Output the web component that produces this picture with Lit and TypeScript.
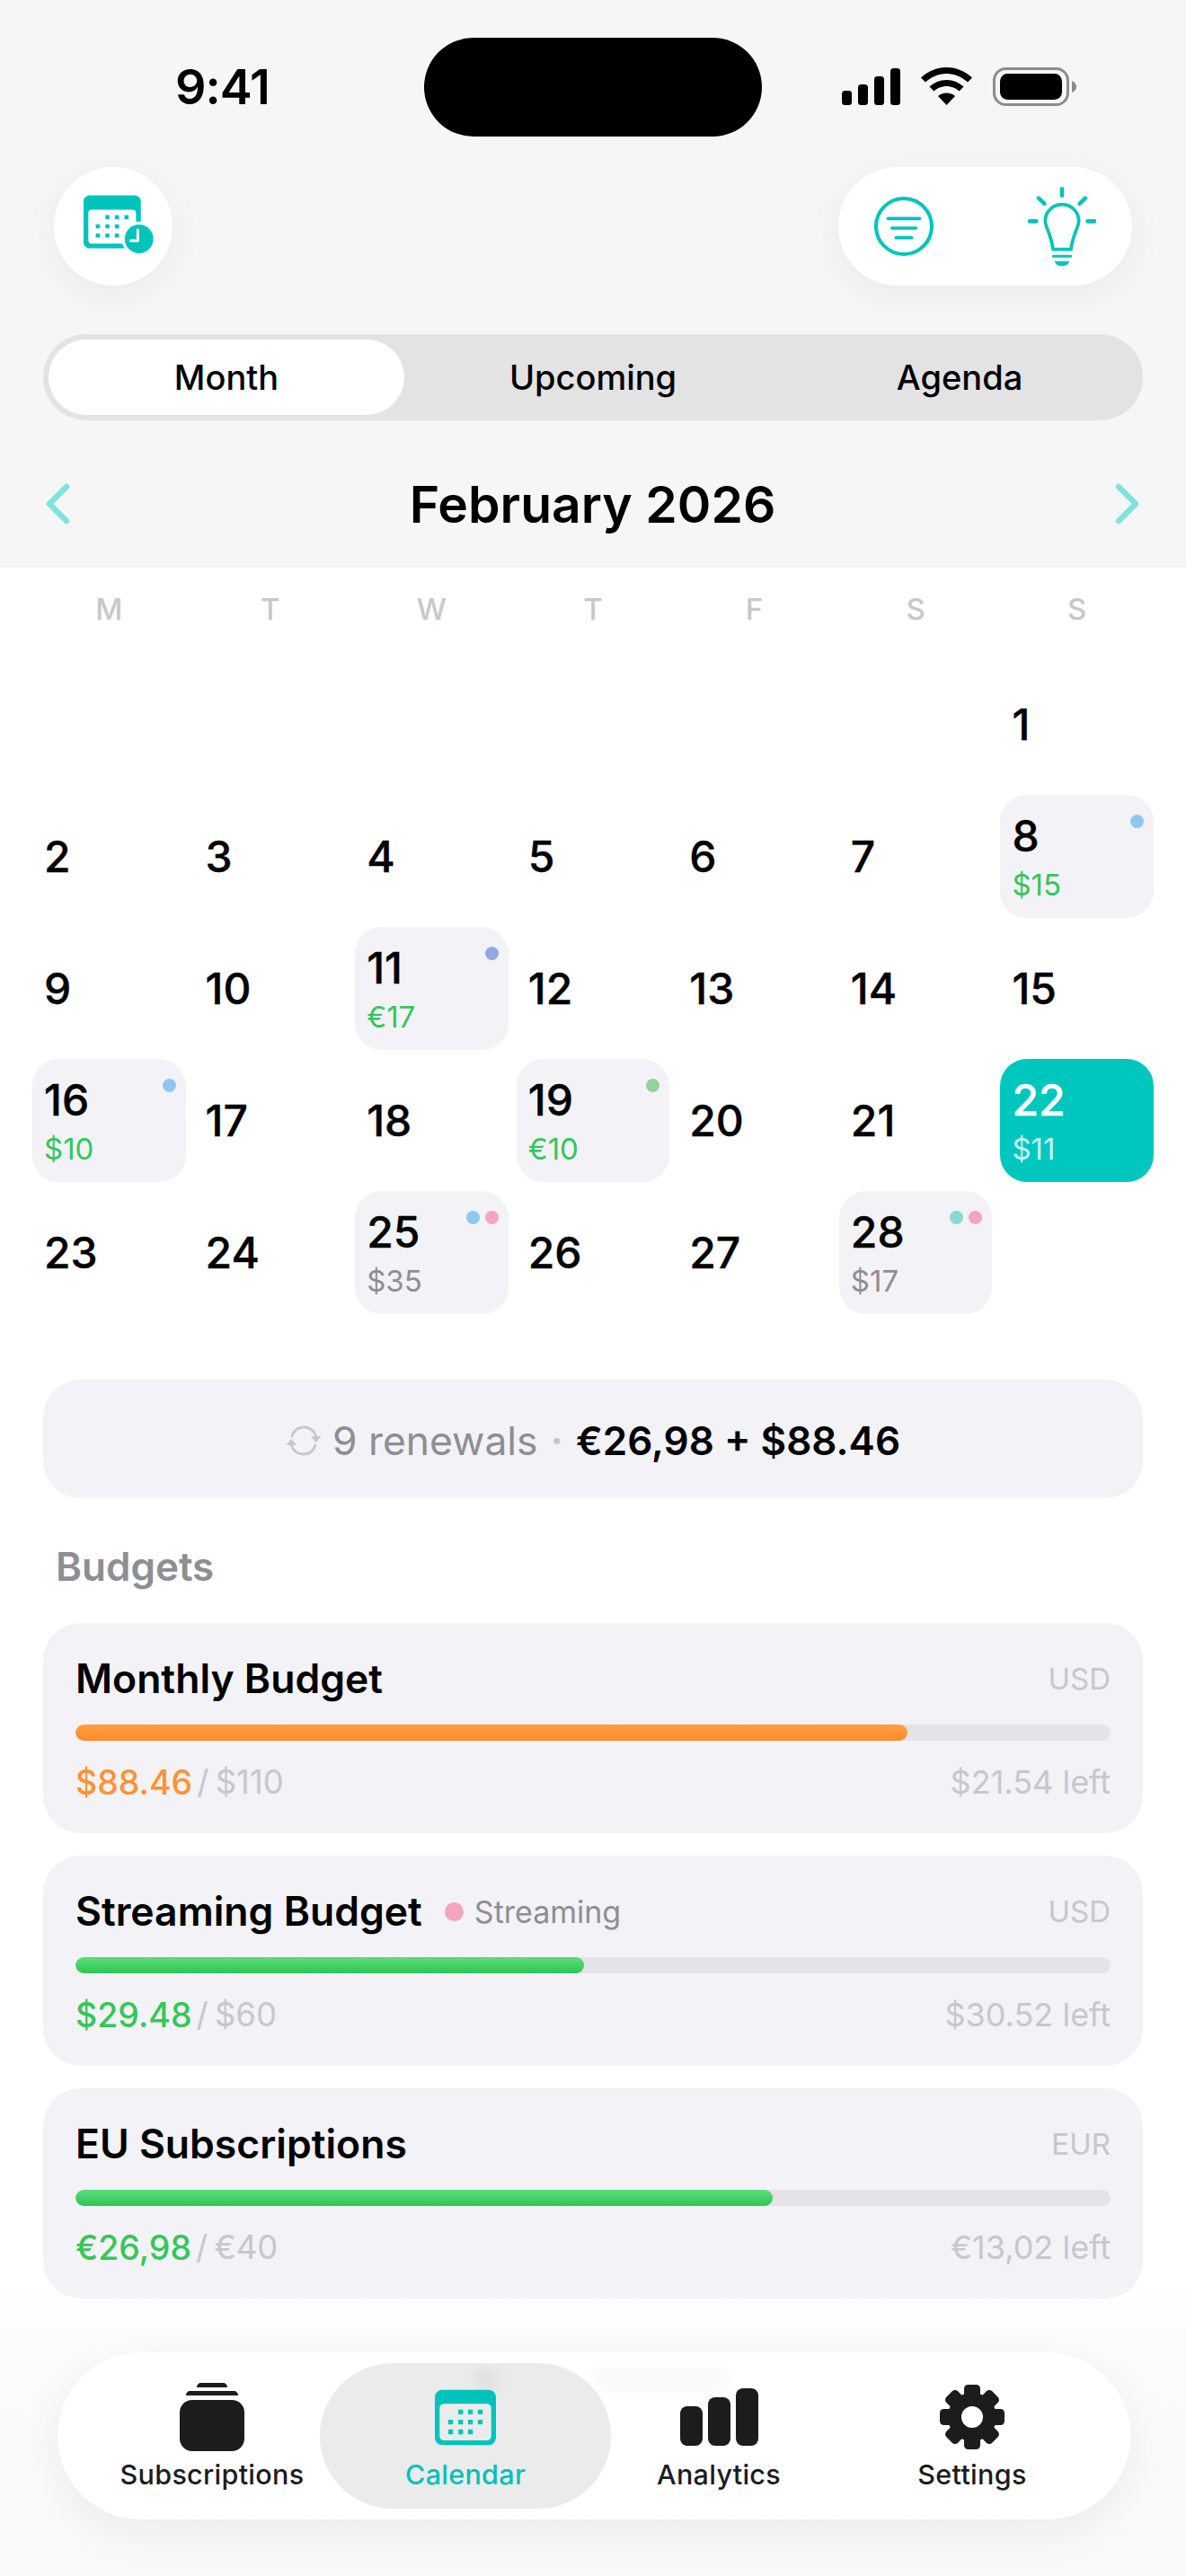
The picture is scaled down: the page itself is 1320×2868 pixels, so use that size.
import { LitElement, html, css, svg } from "lit";
import { customElement } from "lit/decorators.js";

type Day = { n: number; amt?: string; tone?: string; dots?: string[]; today?: boolean };
const days: (Day | null)[] = [
  null, null, null, null, null, null, { n: 1 },
  { n: 2 }, { n: 3 }, { n: 4 }, { n: 5 }, { n: 6 }, { n: 7 }, { n: 8, amt: "$15", tone: "green", dots: ["#8ec8ef"] },
  { n: 9 }, { n: 10 }, { n: 11, amt: "€17", tone: "green", dots: ["#93a8e2"] }, { n: 12 }, { n: 13 }, { n: 14 }, { n: 15 },
  { n: 16, amt: "$10", tone: "green", dots: ["#8ec8ef"] }, { n: 17 }, { n: 18 }, { n: 19, amt: "€10", tone: "green", dots: ["#90d39b"] }, { n: 20 }, { n: 21 }, { n: 22, amt: "$11", today: true },
  { n: 23 }, { n: 24 }, { n: 25, amt: "$35", tone: "grey", dots: ["#8ec8ef", "#f3a4bf"] }, { n: 26 }, { n: 27 }, { n: 28, amt: "$17", tone: "grey", dots: ["#88d8d3", "#f3a4bf"] }, null,
];
const budgets = [
  { name: "Monthly Budget", cur: "USD", spent: "$88.46", total: "$110", left: "$21.54 left", pct: 80.4, tone: "orange" },
  { name: "Streaming Budget", tag: "Streaming", cur: "USD", spent: "$29.48", total: "$60", left: "$30.52 left", pct: 49.1, tone: "ok" },
  { name: "EU Subscriptions", cur: "EUR", spent: "€26,98", total: "€40", left: "€13,02 left", pct: 67.4, tone: "ok" },
];

const calDots = (rows: number[][], ys: number[], r: number) =>
  rows.map((xs, i) => xs.map((x) => svg`<rect x=${x - r} y=${ys[i] - r} width=${r * 2} height=${r * 2} rx="2"/>`));

@customElement("app-root")
export class AppRoot extends LitElement {
  static styles = css`
    :host { display: block; width: 1320px; height: 2868px; position: relative; overflow: hidden; background: #fff;
      font-family: Inter, "Noto Sans", sans-serif; color: #000; }
    svg { display: block; }
    .header { background: #f6f6f6; height: 632px; display: flex; flex-direction: column; }
    .status { display: grid; grid-template-columns: 472px 376px 1fr; height: 110px; margin-top: 42px; align-items: center; }
    .time { padding-left: 195px; font-size: 54px; font-weight: 600; letter-spacing: -1px; line-height: 1; }
    .island { height: 110px; background: #000; border-radius: 55px; }
    .status-icons { padding-left: 89px; display: flex; }
    .tools { display: flex; justify-content: space-between; padding: 0 60px; margin-top: 34px; }
    .round { height: 132px; background: #fff; border-radius: 66px; box-shadow: 0 10px 40px rgba(0,0,0,.05); display: flex; align-items: center; }
    .round.one { width: 132px; box-sizing: border-box; padding: 0 0 4px 33px; }
    .round.two { width: 327px; padding-left: 40px; box-sizing: border-box; gap: 104px; }
    .seg { margin: 54px 48px 0; height: 96px; border-radius: 48px; background: #e3e3e4; display: grid; grid-template-columns: repeat(3, 1fr); }
    .seg span { display: flex; align-items: center; justify-content: center; font-size: 38px; font-weight: 500; margin: 6px; border-radius: 42px; }
    .seg span.on { background: #fff; }
    .month { flex: 1; display: flex; align-items: center; justify-content: space-between; padding: 22px 51px 0 50px; }
    .month h1 { margin: 0; font-size: 57px; font-weight: 600; }
    .weeks { display: grid; grid-template-columns: repeat(7, 1fr); gap: 9px; padding: 0 36px; height: 106px; align-items: start; }
    .weeks span { text-align: center; font-size: 33px; color: #c7c7cc; line-height: 40px; padding-top: 26px; font-weight: 500; }
    .grid { display: grid; grid-template-columns: repeat(7, 1fr); column-gap: 9px; row-gap: 10px; grid-auto-rows: 137px; padding: 0 36px; }
    .cell { padding: 0 13px; display: flex; flex-direction: column; justify-content: center; position: relative; border-radius: 30px; }
    .cell b { font-size: 48px; font-weight: 500; line-height: 58px; -webkit-text-stroke: .4px #000; }
    .cell.today b { -webkit-text-stroke: .4px #fff; }
    .cell i { font-style: normal; font-size: 33px; line-height: 40px; margin-top: 5px; }
    .cell.ev { background: #f2f2f7; }
    .cell.today { background: #00c7be; color: #fff; }
    .cell.today i { color: rgba(255,255,255,.8); }
    .green { color: #34c759; }
    .grey { color: #8e8e93; }
    .dots { position: absolute; top: 22px; right: 11px; display: flex; gap: 6px; }
    .dots u { width: 15px; height: 15px; border-radius: 50%; display: block; }
    .summary { margin: 73px 48px 0; height: 132px; box-sizing: border-box; padding-top: 3px; border-radius: 42px; background: #f2f2f7; display: flex; align-items: center; justify-content: center; font-size: 44.4px; }
    .summary .lab { color: #8e8e93; margin-left: 12px; }
    .summary .sep { color: #c7c7cc; margin: 0 14px; font-size: 45px; font-weight: 600; }
    .summary .sum { font-weight: 600; font-size: 44px; }
    h2 { margin: 46px 0 0 62px; font-size: 44px; line-height: 60px; font-weight: 600; color: #8e8e93; }
    .list { margin: 33px 48px 0; display: flex; flex-direction: column; gap: 25px; }
    .card { height: 234px; box-sizing: border-box; border-radius: 42px; background: #f2f2f7; padding: 35px 36px 0; }
    .row { display: flex; align-items: center; height: 54px; }
    .title { font-size: 44.5px; font-weight: 600; }
    .tag { display: flex; align-items: center; margin-left: 25px; font-size: 34px; color: #8e8e93; gap: 12px; }
    .tag u { width: 21px; height: 21px; border-radius: 50%; background: #f3a4bf; display: block; }
    .cur { margin-left: auto; font-size: 33px; color: #c7c7cc; }
    .track { height: 18px; margin-top: 24px; border-radius: 9px; background: #e3e3e8; overflow: hidden; }
    .fill { height: 100%; border-radius: 9px; }
    .fill.orange { background: linear-gradient(#ffa040, #ff8a2a); }
    .fill.ok { background: linear-gradient(#5ddd7c, #30c455); }
    .foot { display: flex; align-items: center; margin-top: 21px; height: 50px; font-size: 36.5px; color: #c7c7cc; }
    .foot .spent { font-weight: 500; font-size: 37.5px; }
    .foot .spent.orange { color: #ff9233; }
    .foot .spent.ok { color: #34c759; }
    .foot .of { margin-left: 5px; word-spacing: -3px; }
    .foot .left { margin-left: auto; font-size: 36px; }
    .fade { position: absolute; left: 0; right: 0; bottom: 0; height: 330px; background: linear-gradient(rgba(250,250,250,0), rgba(250,250,250,.9) 30%, #f9f9f9); pointer-events: none; }
    .tabbar { position: absolute; left: 64px; top: 2619px; width: 1194px; height: 186px; box-sizing: border-box; background: rgba(255,255,255,.96); border-radius: 93px;
      box-shadow: 0 14px 50px rgba(0,0,0,.06); padding: 12px 31px; display: grid; grid-template-columns: repeat(4, 282px); }
    .ghost { position: absolute; height: 28px; top: 16px; border-radius: 14px; filter: blur(7px); background: rgba(0,0,0,.022); }
    .ghost.a { left: 596px; width: 150px; }
    .ghost.b { left: 462px; width: 30px; background: rgba(0,0,0,.04); }
    .tab { position: relative; display: flex; flex-direction: column; align-items: center; color: #1c1c1e; }
    .tab.on { color: #00c0b8; }
    .tab.on::before { content: ""; position: absolute; top: 0; bottom: 0; left: -21px; right: -21px; background: #ebebec; border-radius: 81px; }
    .tab > * { position: relative; }
    .tab .ic { height: 88px; margin-top: 16px; display: flex; align-items: center; }
    .tab .lb { position: absolute; left: -40px; right: -40px; top: 104px; text-align: center; font-size: 30.5px; line-height: 40px; font-weight: 500; letter-spacing: .3px; }
  `;

  chevron(flip: boolean) {
    return html`<svg width="28" height="46" viewBox="0 0 28 46" fill="none" stroke="#7fe3de" stroke-width="6.500" stroke-linecap="round" stroke-linejoin="round">
      <path d=${flip ? "M4 4l19 19L4 42" : "M24 4L5 23l19 19"} /></svg>`;
  }

  calendarIcon() {
    return html`<svg width="68" height="63" viewBox="1097 118 206 187" fill="#00c4bb">
      <path fill-rule="evenodd" d="M1122 118h156a25 25 0 0 1 25 25v137a25 25 0 0 1-25 25h-156a25 25 0 0 1-25-25V143a25 25 0 0 1 25-25zM1128 165a15 15 0 0 0-15 15v94a15 15 0 0 0 15 15h144a15 15 0 0 0 15-15v-94a15 15 0 0 0-15-15z" />
      ${calDots([[1184, 1217, 1250], [1150, 1184, 1217, 1250], [1150, 1184, 1217]], [193, 227, 260], 8)}
    </svg>`;
  }

  render() {
    return html`
      <div class="header">
        <div class="status">
          <div class="time">9:41</div>
          <div class="island"></div>
          <div class="status-icons">
            <svg width="261" height="46" viewBox="937 74 261 46">
              <rect x="937" y="101" width="11" height="16" rx="3.500"/>
              <rect x="955" y="94" width="11" height="23" rx="3.500"/>
              <rect x="973" y="85" width="11" height="32" rx="3.500"/>
              <rect x="991" y="76" width="11" height="41" rx="3.500"/>
              <path d="M1053.500 75c11 0 21 4.500 28.500 11.500l-5 5c-6-5.500-14.500-9.500-23.500-9.500s-17.500 4-23.500 9.500l-5-5c7.500-7 17.500-11.500 28.500-11.500z"/>
              <path d="M1053.500 89c7.500 0 14 3 19 7.500l-5 5c-3.500-3.200-8.500-5.500-14-5.500s-10.500 2.300-14 5.500l-5-5c5-4.500 11.500-7.500 19-7.500z"/>
              <path d="M1053.500 103.500c3.800 0 7 1.300 9.500 3.500l-9.500 10-9.500-10c2.500-2.200 5.700-3.500 9.500-3.500z"/>
              <rect x="1106.500" y="76.500" width="82" height="40" rx="13" fill="none" stroke="#8c8c8c" stroke-width="3"/>
              <rect x="1113" y="82" width="69" height="29" rx="8.500"/>
              <path d="M1193 90c3 .8 5 3.500 5 6.500s-2 5.700-5 6.500z" fill="#8c8c8c"/>
            </svg>
          </div>
        </div>
        <div class="tools">
          <div class="round one">
            <svg width="78" height="66" viewBox="160 142 235 196">
              <path fill="#00c4bb" fill-rule="evenodd" d="M180 142h152a20 20 0 0 1 20 20v158H180a20 20 0 0 1-20-20V162a20 20 0 0 1 20-20zM188 190a12 12 0 0 0-12 12v90a12 12 0 0 0 12 12h148V202a12 12 0 0 0-12-12z"/>
              <g fill="#00c4bb">${calDots([[240, 272, 304], [208, 240, 272], [208, 240, 272]], [215, 246, 277], 7)}</g>
              <circle cx="346" cy="288" r="58" fill="#fff"/>
              <circle cx="346" cy="288" r="48" fill="#00c4bb"/>
              <path d="M342 258v36h-24" fill="none" stroke="#fff" stroke-width="9" stroke-linecap="round" stroke-linejoin="round"/>
            </svg>
          </div>
          <div class="round two">
            <svg width="66" height="66" viewBox="156 147 198 198" fill="none" stroke="#00c4bb" stroke-linecap="round">
              <circle cx="255" cy="246" r="93" stroke-width="12"/>
              <path d="M202 220h106M215 252h80M229 284h52" stroke-width="11"/>
            </svg>
            <svg width="78" height="90" viewBox="663 110 234 270" fill="none" stroke="#00c4bb" stroke-linecap="round" stroke-linejoin="round">
              <path d="M780 120v22M702 151l19 18M858 151l-19 18M672 228h22M866 228h22" stroke-width="14"/>
              <path d="M750 322c-4-34-14-55-22-76-15-40 16-74 52-74s67 34 52 74c-8 21-18 42-22 76z" stroke-width="11"/>
              <path d="M751 345h58" stroke-width="9"/>
              <path d="M755 361h50c-3 11-14 17-25 17s-22-6-25-17z" fill="#00c4bb" stroke="none"/>
            </svg>
          </div>
        </div>
        <div class="seg">
          <span class="on">Month</span><span>Upcoming</span><span>Agenda</span>
        </div>
        <div class="month">${this.chevron(false)}<h1>February 2026</h1>${this.chevron(true)}</div>
      </div>

      <div class="weeks">${["M", "T", "W", "T", "F", "S", "S"].map((d) => html`<span>${d}</span>`)}</div>
      <div class="grid">
        ${days.map((d) => d === null ? html`<div></div>` : html`
          <div class="cell ${d.today ? "today" : d.amt ? "ev" : ""}">
            <b>${d.n}</b>
            ${d.amt ? html`<i class=${d.tone ?? ""}>${d.amt}</i>` : ""}
            ${d.dots ? html`<div class="dots">${d.dots.map((c) => html`<u style="background:${c}"></u>`)}</div>` : ""}
          </div>`)}
      </div>

      <div class="summary">
        <svg width="40" height="36" viewBox="0 0 40 36" fill="none" stroke="#c7c7cc" stroke-width="2.800" stroke-linecap="round">
          <path d="M7 13C9 6.500 14 3 20 3c6 0 11 3 13.500 9"/>
          <path d="M33 23c-2 6.500-7 10-13 10-6 0-11-3-13.500-9"/>
          <path d="M28 13h11.500l-5.750 7z" fill="#c7c7cc" stroke="none"/>
          <path d="M.5 23H12l-5.750-7z" fill="#c7c7cc" stroke="none"/>
        </svg>
        <span class="lab">9 renewals</span><span class="sep">·</span><span class="sum">€26,98 + $88.46</span>
      </div>

      <h2>Budgets</h2>
      <div class="list">
        ${budgets.map((b) => html`
          <div class="card">
            <div class="row">
              <span class="title">${b.name}</span>
              ${b.tag ? html`<span class="tag"><u></u>${b.tag}</span>` : ""}
              <span class="cur">${b.cur}</span>
            </div>
            <div class="track"><div class="fill ${b.tone}" style="width:${b.pct}%"></div></div>
            <div class="foot">
              <span class="spent ${b.tone}">${b.spent}</span><span class="of">/ ${b.total}</span><span class="left">${b.left}</span>
            </div>
          </div>`)}
      </div>

      <div class="fade"></div>
      <div class="tabbar">
        <div class="tab">
          <div class="ic"><svg width="72" height="76" viewBox="0 0 72 76" fill="#1c1c1e">
            <path d="M19 5c0-3 2-5 5-5h24c3 0 5 2 5 5z"/>
            <path d="M7 14c0-3 2-5 5-5h48c3 0 5 2 5 5z"/>
            <rect y="19" width="72" height="57" rx="14"/>
          </svg></div>
          <span class="lb">Subscriptions</span>
        </div>
        <div class="tab on">
          <div class="ic">${this.calendarIcon()}</div>
          <span class="lb">Calendar</span>
        </div>
        <div class="tab">
          <div class="ic"><svg width="87" height="64" viewBox="0 0 87 64" fill="#1c1c1e">
            <rect y="20" width="25" height="44" rx="8"/>
            <rect x="31" y="10" width="25" height="54" rx="8"/>
            <rect x="62" width="25" height="64" rx="8"/>
          </svg></div>
          <span class="lb">Analytics</span>
        </div>
        <div class="tab">
          <div class="ic"><svg width="72" height="72" viewBox="-36 -36 72 72" fill="#1c1c1e">
            <circle r="19.500" fill="none" stroke="#1c1c1e" stroke-width="15"/>
            ${[0, 45, 90, 135, 180, 225, 270, 315].map((a) => svg`<rect x="-9" y="-36" width="18" height="16" rx="4.500" transform="rotate(${a})"/>`)}
          </svg></div>
          <span class="lb">Settings</span>
        </div>
        <div class="ghost a"></div>
        <div class="ghost b"></div>
      </div>
    `;
  }
}
